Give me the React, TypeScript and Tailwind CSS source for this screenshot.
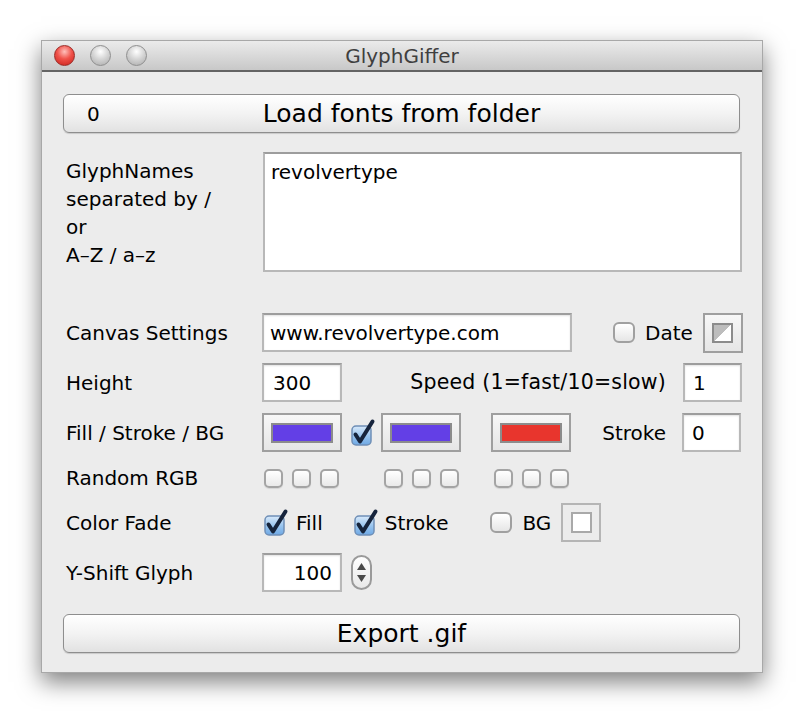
import React from 'react';

const TrafficLight = ({ red }: { red?: boolean }) => (
  <div
    className={`w-[21px] h-[21px] rounded-full border ${
      red
        ? 'border-[#9b2a25] bg-[radial-gradient(circle_at_50%_30%,#ffc0bb_0%,#f0524a_45%,#c8201a_100%)]'
        : 'border-[#8f8f8f] bg-[radial-gradient(circle_at_50%_30%,#ffffff_0%,#d6d6d6_45%,#a9a9a9_100%)]'
    }`}
  />
);

const TextBox = ({ value, className }: { value: string; className: string }) => (
  <div
    className={`h-[39px] bg-white border-2 border-[#b8b8b8] border-t-[#9d9d9d] shadow-[inset_0_1px_2px_rgba(0,0,0,0.12)] flex items-center text-[20px] text-black ${className}`}
  >
    {value}
  </div>
);

const ColorWell = ({ swatch, className = '' }: { swatch: string; className?: string }) => (
  <div
    className={`w-[80px] h-[39px] border-2 border-[#9f9f9f] bg-linear-to-b from-[#f7f7f7] to-[#e6e6e6] flex items-center justify-center ${className}`}
  >
    <div className={`w-[62px] h-[20px] border-2 border-[#8c8c8c] ${swatch}`} />
  </div>
);

const Check = ({ checked, small }: { checked?: boolean; small?: boolean }) => {
  if (small) {
    return (
      <div className="w-[19px] h-[19px] rounded-[5px] border-2 border-[#a4a4a4] bg-linear-to-b from-white to-[#e9e9e9] shadow-[0_1px_1px_rgba(0,0,0,0.1)]" />
    );
  }
  if (!checked) {
    return (
      <div className="w-[22px] h-[21px] rounded-[6px] border-2 border-[#a0a0a0] bg-linear-to-b from-white to-[#e6e6e6]" />
    );
  }
  return (
    <svg width="24" height="26" viewBox="0 0 24 26" className="overflow-visible">
      <defs>
        <linearGradient id="cbBlue" x1="0" y1="0" x2="0" y2="1">
          <stop offset="0" stopColor="#d8e9fa" />
          <stop offset="0.5" stopColor="#9cc7f0" />
          <stop offset="1" stopColor="#6ea8e4" />
        </linearGradient>
      </defs>
      <rect x="1" y="6" width="19" height="19" rx="4" fill="url(#cbBlue)" stroke="#6f8fb6" strokeWidth="1.5" />
      <path d="M4.5 14.5 L9 21.5 L21.5 1.5" fill="none" stroke="#16243c" strokeWidth="4" strokeLinecap="round" strokeLinejoin="round" />
    </svg>
  );
};

const Label = ({ children }: { children: React.ReactNode }) => (
  <div className="w-[199px] pl-[3px] text-[20px] text-black leading-[28px]">{children}</div>
);

const MacButton = ({ children, className = '' }: { children: React.ReactNode; className?: string }) => (
  <div
    className={`w-[677px] rounded-[6px] border border-[#8e8e8e] bg-linear-to-b from-white via-[#f3f3f3] to-[#e2e2e2] shadow-[0_1px_1px_rgba(0,0,0,0.15)] text-black ${className}`}
  >
    {children}
  </div>
);

export default function App() {
  return (
    <div className="min-h-[711px] bg-white pt-[40px] pl-[41px] font-['DejaVu_Sans',sans-serif]">
      <div className="w-[722px] bg-[#ececec] border border-[#a8a8a8] shadow-[0_9px_22px_rgba(0,0,0,0.5)]">
        {/* title bar */}
        <div className="h-[31px] grid grid-cols-[1fr_auto_1fr] items-center bg-linear-to-b from-[#ebebeb] to-[#c8c8c8] border-b-2 border-[#646464]">
          <div className="flex items-center gap-[15px] pl-[12px]">
            <TrafficLight red />
            <TrafficLight />
            <TrafficLight />
          </div>
          <div className="text-[20px] text-[#3f3f3f] leading-none">GlyphGiffer</div>
          <div />
        </div>

        <div className="pl-[21px] pt-[22px] pb-[19px]">
          <MacButton className="h-[39px] grid grid-cols-[1fr_auto_1fr] items-center">
            <div className="pl-[23px] text-[20px]">0</div>
            <div className="text-[25px] leading-none">Load fonts from folder</div>
            <div />
          </MacButton>

          {/* glyph names */}
          <div className="flex mt-[19px]">
            <div className="pt-[5px]">
              <Label>
                GlyphNames
                <br />
                separated by /
                <br />
                or
                <br />
                A–Z / a–z
              </Label>
            </div>
            <div className="w-[479px] h-[120px] ml-[1px] bg-white border-2 border-[#b8b8b8] border-t-[#9d9d9d] pl-[6px] pt-[4px] text-[20px] leading-[28px]">
              revolvertype
            </div>
          </div>

          {/* canvas settings */}
          <div className="flex items-center mt-[41px] h-[39px]">
            <Label>Canvas Settings</Label>
            <TextBox value="www.revolvertype.com" className="w-[310px] pl-[6px]" />
            <div className="ml-[41px]">
              <Check />
            </div>
            <div className="ml-[10px] text-[20px]">Date</div>
            <div className="ml-[10px] w-[40px] h-[40px] border-2 border-[#9f9f9f] bg-linear-to-b from-[#f7f7f7] to-[#e6e6e6] flex items-center justify-center">
              <div className="w-[21px] h-[20px] border-2 border-[#8c8c8c] bg-[linear-gradient(135deg,#bdbdbd_50%,#ffffff_50%)]" />
            </div>
          </div>

          {/* height / speed */}
          <div className="flex items-center mt-[11px] h-[39px]">
            <Label>Height</Label>
            <TextBox value="300" className="w-[80px] pl-[9px]" />
            <div className="w-[341px] text-right pr-[17px] text-[20.5px] tracking-[0.2px]">Speed (1=fast/10=slow)</div>
            <TextBox value="1" className="w-[59px] pl-[8px]" />
          </div>

          {/* fill / stroke / bg */}
          <div className="flex items-center mt-[11px] h-[39px]">
            <Label>Fill / Stroke / BG</Label>
            <ColorWell swatch="bg-[#633fe6]" />
            <div className="ml-[9px] w-[22px] flex items-center">
              <Check checked />
            </div>
            <ColorWell swatch="bg-[#633fe6]" className="ml-[8px]" />
            <ColorWell swatch="bg-[#e8352d]" className="ml-[30px]" />
            <div className="w-[111px] text-right pr-[16px] text-[20px]">Stroke</div>
            <TextBox value="0" className="w-[59px] pl-[8px]" />
          </div>

          {/* random rgb */}
          <div className="flex items-center mt-[13px] h-[26px]">
            <Label>Random RGB</Label>
            <div className="flex gap-[9px] ml-[2px]">
              <Check small />
              <Check small />
              <Check small />
            </div>
            <div className="flex gap-[9px] ml-[45px]">
              <Check small />
              <Check small />
              <Check small />
            </div>
            <div className="flex gap-[9px] ml-[35px]">
              <Check small />
              <Check small />
              <Check small />
            </div>
          </div>

          {/* color fade */}
          <div className="flex items-center mt-[12px] h-[39px]">
            <Label>Color Fade</Label>
            <div className="ml-[2px] flex items-center">
              <Check checked />
            </div>
            <div className="ml-[8px] text-[20px]">Fill</div>
            <div className="ml-[31px] flex items-center">
              <Check checked />
            </div>
            <div className="ml-[7px] text-[20px]">Stroke</div>
            <div className="ml-[42px]">
              <Check />
            </div>
            <div className="ml-[10px] text-[20px]">BG</div>
            <div className="ml-[10px] w-[40px] h-[39px] border-2 border-[#b5b5b5] bg-[#ececec] flex items-center justify-center">
              <div className="w-[21px] h-[21px] border-2 border-[#a9a9a9] bg-white" />
            </div>
          </div>

          {/* y-shift */}
          <div className="flex items-center mt-[11px] h-[39px]">
            <Label>Y-Shift Glyph</Label>
            <TextBox value="100" className="w-[80px] justify-end pr-[8px]" />
            <div className="ml-[9px] w-[21px] h-[35px] rounded-full border-2 border-[#9a9a9a] bg-linear-to-b from-white to-[#e8e8e8] flex flex-col items-center justify-center gap-[5px]">
              <svg width="9" height="7" viewBox="0 0 9 7">
                <path d="M4.5 0 L9 7 L0 7 Z" fill="#4a4a4a" />
              </svg>
              <svg width="9" height="7" viewBox="0 0 9 7">
                <path d="M0 0 L9 0 L4.5 7 Z" fill="#4a4a4a" />
              </svg>
            </div>
          </div>

          <MacButton className="mt-[22px] h-[39px] flex items-center justify-center">
            <div className="text-[25px] leading-none">Export .gif</div>
          </MacButton>
        </div>
      </div>
    </div>
  );
}
